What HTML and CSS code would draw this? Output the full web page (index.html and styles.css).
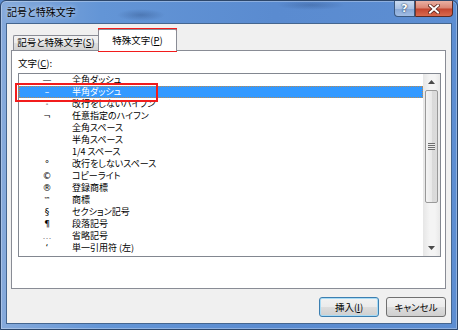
FILE: index.html
```html
<!DOCTYPE html>
<html lang="ja">
<head>
    <meta charset="UTF-8">
    <title>記号と特殊文字</title>
    <link rel="stylesheet" href="styles.css">
</head>
<body>
    <div class="window">
        <div class="titlebar">
            <span class="title">記号と特殊文字</span>
            <div class="caption-buttons">
                <span class="cap-btn cap-help">?</span>
                <span class="cap-btn cap-close">
                    <svg width="12" height="10" viewBox="0 0 12 10">
                        <path d="M2 1.5 L10 8.5 M10 1.5 L2 8.5" stroke="#5b2219" stroke-width="3.6" stroke-linecap="square"/>
                        <path d="M2 1.5 L10 8.5 M10 1.5 L2 8.5" stroke="#fff" stroke-width="2" stroke-linecap="square"/>
                    </svg>
                </span>
            </div>
        </div>

        <div class="client">
            <div class="tabs">
                <div class="tab">記号と特殊文字(<u>S</u>)</div>
                <div class="tab tab-active">特殊文字(<u>P</u>)</div>
            </div>

            <div class="panel">
                <div class="field-label">文字(<u>C</u>):</div>
                <div class="listbox">
                    <ul class="rows">
                        <li class="row"><span class="sym">—</span><span>全角ダッシュ</span></li>
                        <li class="row row-selected"><span class="sym">–</span><span>半角ダッシュ</span></li>
                        <li class="row"><span class="sym sym-small">-</span><span>改行をしないハイフン</span></li>
                        <li class="row"><span class="sym">¬</span><span>任意指定のハイフン</span></li>
                        <li class="row"><span class="sym"></span><span>全角スペース</span></li>
                        <li class="row"><span class="sym"></span><span>半角スペース</span></li>
                        <li class="row"><span class="sym"></span><span>1/4 スペース</span></li>
                        <li class="row"><span class="sym">°</span><span>改行をしないスペース</span></li>
                        <li class="row"><span class="sym">©</span><span>コピーライト</span></li>
                        <li class="row"><span class="sym">®</span><span>登録商標</span></li>
                        <li class="row"><span class="sym sym-small">™</span><span>商標</span></li>
                        <li class="row"><span class="sym">§</span><span>セクション記号</span></li>
                        <li class="row"><span class="sym">¶</span><span>段落記号</span></li>
                        <li class="row"><span class="sym sym-light">…</span><span>省略記号</span></li>
                        <li class="row"><span class="sym">‘</span><span>単一引用符 (左)</span></li>
                    </ul>
                    <div class="scrollbar">
                        <div class="sb-arrow">
                            <svg width="7" height="4" viewBox="0 0 7 4"><polygon points="3.5,0 7,4 0,4" fill="#4a4a4a"/></svg>
                        </div>
                        <div class="sb-thumb">
                            <span class="grip"></span>
                        </div>
                        <div class="sb-track"></div>
                        <div class="sb-arrow">
                            <svg width="7" height="4" viewBox="0 0 7 4"><polygon points="0,0 7,0 3.5,4" fill="#4a4a4a"/></svg>
                        </div>
                    </div>
                </div>
            </div>

            <div class="buttons">
                <button class="btn btn-default">挿入(<u>I</u>)</button>
                <button class="btn">キャンセル</button>
            </div>
        </div>

        <!-- red annotation boxes drawn over the dialog -->
        <div class="mark mark-tab"></div>
        <div class="mark mark-row"></div>
    </div>
</body>
</html>
```

FILE: styles.css
```css
* {
    box-sizing: border-box;
}

body {
    margin: 0;
    width: 458px;
    height: 330px;
    overflow: hidden;
    background-color: #5a8acd;
    font-family: "Noto Sans CJK JP", "Noto Sans", sans-serif;
    font-feature-settings: "palt";
    color: #000;
}

.window {
    position: relative;
    width: 458px;
    height: 330px;
    display: flex;
    flex-direction: column;
    padding: 0 5px 5px;
    border: 1px solid #2d476b;
    border-radius: 6px 6px 0 0;
    background:
        radial-gradient(ellipse 24px 6px at 140px 14px, rgba(40, 70, 120, 0.35), transparent),
        radial-gradient(ellipse 34px 5px at 310px 4px, rgba(40, 70, 120, 0.3), transparent),
        linear-gradient(to right, #86aadb 0%, #6395d6 22%, #5a8bd0 60%, #5d8ed2 100%);
    box-shadow: inset 0 0 0 1px rgba(255, 255, 255, 0.3);
    overflow: hidden;
}

/* title bar */

.titlebar {
    height: 22px;
    display: flex;
    align-items: flex-start;
}

.title {
    margin: 4px 0 0 1px;
    font-size: 10px;
    line-height: 14px;
    text-shadow: 0 0 5px rgba(255, 255, 255, 0.8);
}

.caption-buttons {
    margin-left: auto;
    margin-right: -1px;
    display: flex;
}

.cap-btn {
    height: 16px;
    display: flex;
    align-items: center;
    justify-content: center;
}

.cap-help {
    width: 21px;
    border: 1px solid #3a587f;
    border-top: none;
    border-radius: 0 0 0 4px;
    background: linear-gradient(#c9daf0, #a9c1e3 50%, #87a7d5 51%, #a1bde4);
    color: #fff;
    font-family: "DejaVu Sans", sans-serif;
    font-size: 11px;
    font-weight: bold;
    text-shadow: 0 0 2px #213b5e, 0 0 1px #213b5e;
}

.cap-close {
    width: 38px;
    border: 1px solid #5c2a22;
    border-left: 1px solid #6e3a30;
    border-top: none;
    border-radius: 0 0 4px 0;
    background: linear-gradient(#eab0a3, #da8472 48%, #c4442e 52%, #d96a4e);
}

/* client area */

.client {
    flex: 1;
    display: flex;
    flex-direction: column;
    padding: 0 5px 0 4px;
    border: 1px solid #45668f;
    background-color: #f0f0f0;
}

.tabs {
    position: relative;
    z-index: 1;
    height: 22px;
    margin-top: 5px;
    margin-bottom: -1px;
    padding-left: 2px;
    display: flex;
    align-items: flex-end;
}

.tab {
    width: 85px;
    height: 15px;
    margin-bottom: 1px;
    border: 1px solid #898c95;
    border-right: none;
    border-bottom: none;
    border-radius: 2px 0 0 0;
    background: linear-gradient(#f3f3f3, #ebebeb 50%, #dedede 51%, #d2d2d2);
    font-size: 9.5px;
    line-height: 13px;
    text-align: center;
    white-space: nowrap;
}

.tab-active {
    width: 79px;
    height: 22px;
    margin-bottom: 0;
    padding-top: 4px;
    border-right: 1px solid #898c95;
    border-radius: 2px 2px 0 0;
    background: #fff;
}

.panel {
    height: 239px;
    padding: 6px 4px 0 6px;
    border: 1px solid #898c95;
    background-color: #fff;
}

.field-label {
    font-size: 9.5px;
    line-height: 12px;
    margin-bottom: 4px;
}

/* list of characters */

.listbox {
    height: 184px;
    display: flex;
    border: 1px solid #828790;
}

.rows {
    flex: 1;
    margin: 0;
    padding: 0;
    list-style: none;
}

.row {
    height: 12px;
    display: flex;
    font-size: 9px;
    line-height: 12px;
    white-space: nowrap;
}

.sym {
    width: 50px;
    margin-left: 3px;
    text-align: center;
    font-family: "DejaVu Sans", sans-serif;
    font-size: 9px;
}

.sym-small {
    font-size: 7px;
}

.sym-light {
    color: #888;
}

.row-selected {
    background-color: #3399ff;
    color: #fff;
    outline: 1px dotted #b88a52;
    outline-offset: -1px;
}

.scrollbar {
    width: 17px;
    display: flex;
    flex-direction: column;
    background: linear-gradient(to right, #e6e6e6, #f4f4f4 40%, #f4f4f4 70%, #e9e9e9);
}

.sb-arrow {
    height: 16px;
    display: flex;
    align-items: center;
    justify-content: center;
}

.sb-thumb {
    height: 113px;
    margin: 0 2px;
    display: flex;
    align-items: center;
    justify-content: center;
    border: 1px solid #999;
    border-radius: 2px;
    background: linear-gradient(to right, #f4f4f4, #e9e9e9 50%, #d9d9d9 51%, #dcdcdc);
}

.grip {
    width: 7px;
    height: 7px;
    background: repeating-linear-gradient(#6f6f6f 0, #6f6f6f 1px, #ececec 1px, #ececec 2px);
}

.sb-track {
    flex: 1;
}

/* dialog buttons */

.buttons {
    margin-top: 8px;
    display: flex;
    justify-content: flex-end;
    gap: 7px;
}

.btn {
    width: 60px;
    height: 20px;
    padding: 0;
    border: 1px solid #707070;
    border-radius: 3px;
    background: linear-gradient(#f2f2f2, #ebebeb 50%, #dddddd 51%, #cfcfcf);
    font-family: inherit;
    font-feature-settings: "palt";
    font-size: 9.5px;
    line-height: 16px;
    color: #000;
}

.btn-default {
    border-color: #3c7fb1;
    box-shadow: inset 0 0 0 1px #a8dbf5;
}

/* annotations */

.mark {
    position: absolute;
    border: 2px solid #f21c1c;
}

.mark-tab {
    left: 97px;
    top: 27px;
    width: 79px;
    height: 24px;
}

.mark-row {
    left: 14px;
    top: 82px;
    width: 143px;
    height: 19px;
}
```
